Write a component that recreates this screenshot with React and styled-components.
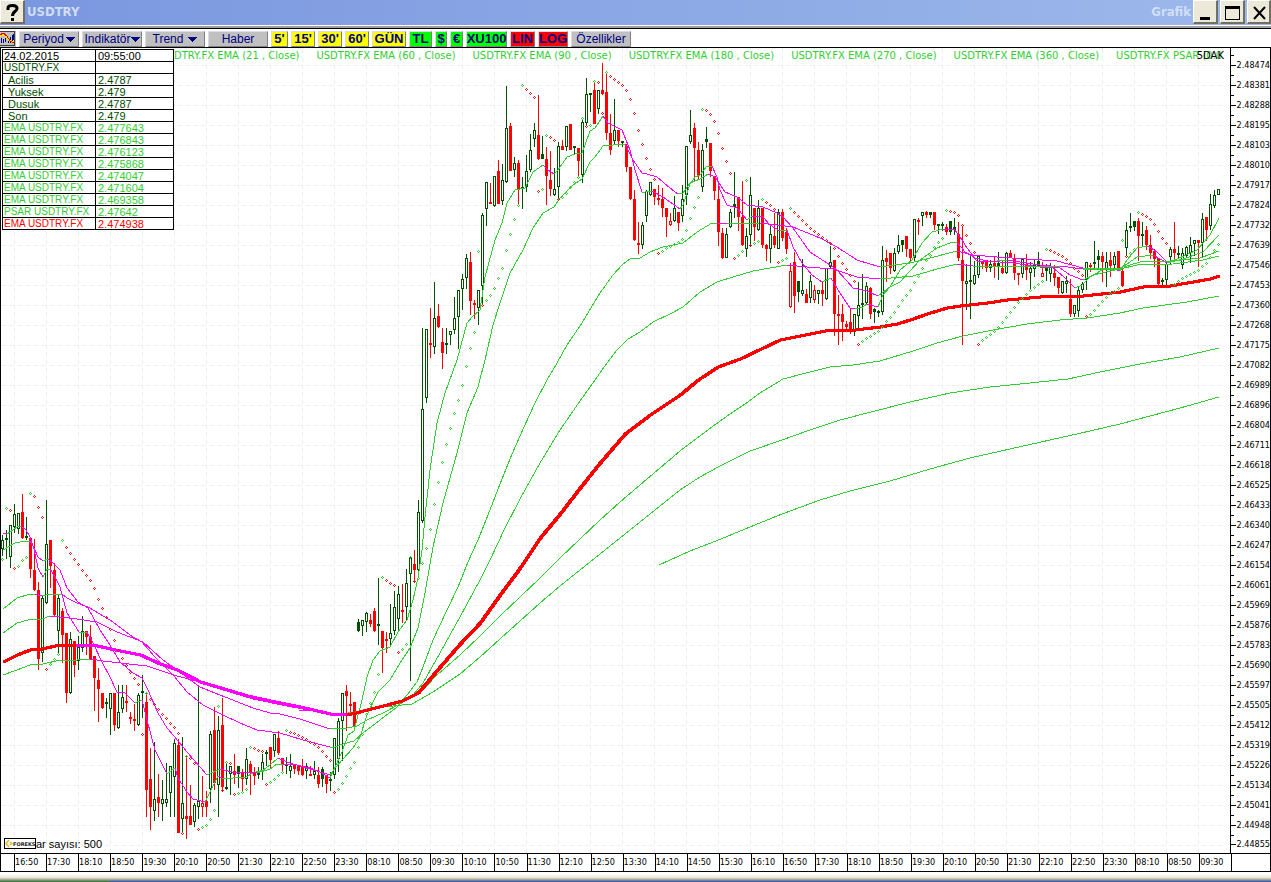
import React from "react";
import styled, { createGlobalStyle } from "styled-components";

const UP = "#005000";
const DOWN = "#ff0000";
const LIME = "#32cd32";
const PINK = "#ff00ff";

const GlobalStyle = createGlobalStyle`
  body {
    margin: 0;
    background: #fff;
    font-family: "Liberation Sans", Arial, sans-serif;
  }
  button {
    font-family: inherit;
  }
`;

const Window = styled.div`
  min-width: 900px;
  overflow: hidden;
`;
const TitleBar = styled.header`
  display: flex;
  align-items: flex-start;
  height: 25px;
  background: linear-gradient(90deg, #7a96df, #9db9eb);
  border-bottom: 1px solid #fff;
`;
const Title = styled.h1`
  flex: ${(props) => (props.grow ? 1 : "none")};
  margin: 0;
  padding-right: 2px;
  color: #d2def8;
  font: bold 13px/23px "DejaVu Sans Condensed", "DejaVu Sans", sans-serif;
`;
const WindowButton = styled.button`
  display: flex;
  align-items: center;
  justify-content: center;
  width: ${(props) => (props.last ? 24 : 25)}px;
  height: 24px;
  margin-right: ${(props) => (props.last ? 0 : 2)}px;
  padding: 0;
  background: #ece9d8;
  border: 1px solid;
  border-width: 1px 2px 2px 1px;
  border-color: #fff #716f64 #716f64 #fff;
`;
const Rule = styled.div`
  height: 2px;
  background: #a0a0a0;
  border-bottom: 1px solid #000;
`;

const Toolbar = styled.nav`
  display: flex;
  align-items: flex-end;
  height: 18px;
  gap: 3px;
`;
const IconButton = styled.button`
  width: 16px;
  height: 16px;
  padding: 0;
  border: 0;
  background: #c0c0c0;
`;
const ToolButton = styled.button`
  display: flex;
  align-items: center;
  justify-content: center;
  gap: ${(props) => props.gap || 0}px;
  width: ${(props) => props.w}px;
  height: 16px;
  padding: 0;
  overflow: hidden;
  white-space: nowrap;
  color: #000080;
  background: ${(props) => props.face || "#c0c0c0"};
  border: 1px solid;
  border-color: #dcdcdc #808080 #808080 #dcdcdc;
  font-size: ${(props) => (props.face ? 13 : 12)}px;
  font-weight: ${(props) => (props.face ? "bold" : "normal")};
  line-height: 14px;
`;

const Frame = styled.main`
  border: 1px solid #000;
`;
const ChartRow = styled.div`
  display: flex;
`;
const Plot = styled.section`
  position: relative;
  flex: 1;
  min-width: 0;
`;
const PlotSvg = styled.svg`
  display: block;
  width: 100%;
  height: 805px;
`;
const Legend = styled.div`
  position: absolute;
  top: 2px;
  left: 173px;
  right: 1px;
  display: flex;
  gap: 17px;
  overflow: hidden;
  white-space: pre;
  color: ${LIME};
  font: 10px/12px "DejaVu Sans", sans-serif;
`;
const Interval = styled.div`
  position: absolute;
  top: 2px;
  right: 6px;
  font: 10px/12px "DejaVu Sans", sans-serif;
`;
const InfoTable = styled.table`
  position: absolute;
  top: 1px;
  left: 1px;
  width: 172px;
  table-layout: fixed;
  border-collapse: collapse;
  background: #fff;
`;
const InfoRow = styled.tr`
  height: 12px;
  color: ${(props) => props.color};
`;
const Cell = styled.td`
  box-sizing: border-box;
  width: ${(props) => props.w}px;
  padding: 1px 0 0 ${(props) => props.pad || 1}px;
  border: 1px solid #000;
  overflow: hidden;
  white-space: nowrap;
  font-size: ${(props) => (props.small ? 10 : 11)}px;
  line-height: 10px;
`;
const BarCount = styled.div`
  position: absolute;
  left: 3px;
  bottom: 3px;
  display: flex;
  align-items: center;
  font-size: 11px;
  line-height: 12px;
`;

const PriceAxis = styled.ul`
  flex: none;
  width: 39px;
  margin: 0;
  padding: 7px 0 0;
  list-style: none;
  border-left: 1px solid #000;
`;
const Price = styled.li`
  position: relative;
  display: flex;
  align-items: center;
  height: 20px;
  gap: 1px;
  font: 9px/20px "DejaVu Sans Condensed", "DejaVu Sans", sans-serif;
  &:last-child {
    height: 18px;
  }
  &::before {
    content: "";
    width: 5px;
    height: 1px;
    background: #000;
  }
  &::after {
    content: "";
    position: absolute;
    top: 0;
    left: 0;
    width: 3px;
    height: 1px;
    background: #000;
  }
`;
const TimeAxis = styled.ol`
  display: flex;
  height: 17px;
  margin: 0;
  padding: 0 39px 0 13px;
  list-style: none;
  border-top: 1px solid #000;
`;
const Time = styled.li`
  flex: 1;
  box-sizing: border-box;
  border-left: 1px solid #000;
  font: 9px/17px "DejaVu Sans Condensed", "DejaVu Sans", sans-serif;
  &:last-child {
    border-right: 1px solid #000;
    margin-right: -1px;
  }
`;
const Bottom = styled.footer`
  height: 6px;
  margin-top: 3px;
  background: linear-gradient(#f6f4ee, #ece9d8 40%, #aca899 75%, #716f64);
`;
const TaskStrip = styled.div`
  height: 1px;
  background: linear-gradient(90deg, #2f8a30 109px, #2a5fd8 109px);
`;

const tools = [
  { label: "Periyod", w: 60, gap: 2, arrow: true },
  { label: "Indikatör", w: 60, gap: 0, arrow: true },
  { label: "Trend", w: 60, gap: 5, arrow: true },
  { label: "Haber", w: 60 },
  { label: "5'", w: 17, face: "#ffff00" },
  { label: "15'", w: 24, face: "#ffff00" },
  { label: "30'", w: 24, face: "#ffff00" },
  { label: "60'", w: 24, face: "#ffff00" },
  { label: "GÜN", w: 34, face: "#ffff00" },
  { label: "TL", w: 23, face: "#00ff00" },
  { label: "$", w: 12, face: "#00ff00" },
  { label: "€", w: 13, face: "#00ff00" },
  { label: "XU100", w: 41, face: "#00ff00" },
  { label: "LIN", w: 25, face: "#ff0000" },
  { label: "LOG", w: 30, face: "#ff0000" },
  { label: "Özellikler", w: 60 },
];

const legend = [
  "DTRY.FX EMA (21 , Close)",
  "USDTRY.FX EMA (60 , Close)",
  "USDTRY.FX EMA (90 , Close)",
  "USDTRY.FX EMA (180 , Close)",
  "USDTRY.FX EMA (270 , Close)",
  "USDTRY.FX EMA (360 , Close)",
  "USDTRY.FX PSAR (0.0",
];

const info = [
  ["24.02.2015", "09:55:00", "#000"],
  ["USDTRY.FX", "", UP],
  ["Acilis", "2.4787", UP],
  ["Yuksek", "2.479", UP],
  ["Dusuk", "2.4787", UP],
  ["Son", "2.479", UP],
  ["EMA USDTRY.FX", "2.477643", LIME],
  ["EMA USDTRY.FX", "2.476843", LIME],
  ["EMA USDTRY.FX", "2.476123", LIME],
  ["EMA USDTRY.FX", "2.475868", LIME],
  ["EMA USDTRY.FX", "2.474047", LIME],
  ["EMA USDTRY.FX", "2.471604", LIME],
  ["EMA USDTRY.FX", "2.469358", LIME],
  ["PSAR USDTRY.FX", "2.47642", LIME],
  ["EMA USDTRY.FX", "2.474938", DOWN],
];

const prices = `2.48474 2.48381 2.48288 2.48195 2.48103 2.48010 2.47917 2.47824 2.47732 2.47639
2.47546 2.47453 2.47360 2.47268 2.47175 2.47082 2.46989 2.46896 2.46804 2.46711
2.46618 2.46525 2.46433 2.46340 2.46247 2.46154 2.46061 2.45969 2.45876 2.45783
2.45690 2.45597 2.45505 2.45412 2.45319 2.45226 2.45134 2.45041 2.44948 2.44855`.split(/\s+/);

const times = `16:50 17:30 18:10 18:50 19:30 20:10 20:50 21:30 22:10 22:50 23:30
08:10 08:50 09:30 10:10 10:50 11:30 12:10 12:50 13:30 14:10 14:50 15:30 16:10 16:50
17:30 18:10 18:50 19:30 20:10 20:50 21:30 22:10 22:50 23:30 08:10 08:50 09:30`.split(/\s+/);

// high, body top, body bottom, low, kind
// g hollow up, G solid up, r solid down, R hollow down
const bars = `
535,540,549,556,g 530,538,540,559,G 525,525,557,568,g 504,514,527,533,g 513,513,529,534,g
494,512,538,539,r 517,536,538,540,G 538,538,569,578,r 539,570,590,591,r 582,590,659,670,r
595,598,653,662,g 500,544,603,604,g 540,540,566,588,r 563,570,615,616,r 595,598,631,653,g
608,611,635,663,r 633,633,693,703,r 632,639,693,694,g 641,641,665,677,r 636,647,661,670,g
616,631,648,652,g 631,631,637,655,r 625,637,659,659,r 656,656,678,711,r 668,680,689,722,r
693,693,708,709,r 698,702,704,718,G 693,693,709,735,g 693,693,725,731,r 685,712,728,729,g
685,697,709,713,g 685,701,703,712,r 712,717,719,724,r 704,719,721,731,r 693,695,725,726,g
675,691,693,718,G 693,702,790,817,r 748,779,807,830,r 742,799,811,821,g 774,797,803,817,r
780,799,804,821,g 763,799,803,807,g 766,766,793,817,g 739,743,777,817,g 739,745,833,833,r
737,803,819,833,g 756,816,819,839,r 785,816,825,825,r 803,805,822,827,g 685,801,807,819,g
776,803,807,817,R 791,801,807,817,r 731,734,789,803,g 707,730,783,790,r 716,730,785,817,g
698,725,787,792,r 764,787,789,790,G 766,766,774,795,g 754,771,775,784,r 766,766,774,788,G
769,772,779,791,r 748,759,779,785,g 761,764,772,795,r 767,773,776,785,r 767,772,775,779,G
754,762,771,780,g 750,752,754,766,G 747,747,760,769,r 734,734,751,757,g 731,738,753,755,r
758,758,764,771,r 757,764,766,774,G 754,766,771,778,g 764,764,769,774,r 766,766,771,775,r
759,767,775,776,r 763,766,771,779,g 766,774,776,776,r 761,771,775,779,g 767,775,784,788,r
767,769,779,787,G 775,775,784,793,r 772,779,781,791,G 738,738,775,779,g 718,721,759,772,g
693,693,721,761,g 685,691,696,731,r 692,704,706,716,r 702,702,727,728,r 619,622,631,632,G
620,620,626,636,g 612,613,622,632,g 614,620,624,627,r 608,611,631,632,r 578,624,626,645,G
631,631,648,673,r 632,639,641,653,r 604,633,639,646,g 591,607,631,635,g 586,594,619,631,g
584,610,612,623,r 569,583,607,621,g 556,558,574,681,g 550,564,570,582,r 500,512,570,571,g
328,409,521,523,g 329,329,398,403,g 308,343,345,358,r 282,318,347,354,g 304,316,327,328,r
328,342,353,369,r 328,343,345,354,G 331,331,335,345,g 297,318,330,334,g 290,290,317,349,g
274,279,289,310,g 254,258,278,289,g 252,262,301,315,r 300,303,305,319,r 290,290,308,325,g
213,215,286,305,g 182,182,209,226,g 183,202,204,204,r 176,176,206,207,g 160,171,204,204,r
164,180,201,205,g 86,128,182,183,g 123,126,171,171,r 157,163,170,177,g 160,163,189,205,r
177,187,189,209,G 155,171,187,192,g 134,150,170,172,g 123,130,139,147,g 95,135,159,160,r
136,154,159,159,G 147,159,176,205,r 151,180,189,196,r 168,189,195,196,g 142,146,187,198,g
140,146,150,150,r 126,126,147,151,g 124,124,150,150,r 146,146,148,154,G 148,148,161,176,r
119,122,175,183,g 78,94,123,125,g 93,93,95,112,G 82,90,124,124,r 90,90,109,114,g
63,90,94,95,r 73,92,133,140,r 114,133,150,155,r 99,130,141,145,g 130,130,141,147,r
141,141,143,147,G 144,146,167,172,r 167,167,199,200,r 190,199,240,241,r 222,243,245,254,r
222,225,245,249,g 190,191,216,222,g 182,182,195,196,g 189,189,197,205,r 185,198,200,205,r
188,199,208,217,r 208,208,217,237,r 213,221,225,226,R 196,208,221,222,g 212,212,223,231,r
185,199,216,222,g 146,146,195,205,g 110,135,142,144,g 123,128,148,182,r 142,150,176,180,r
144,150,187,192,g 127,139,142,148,G 143,143,171,177,r 176,176,191,200,r 181,199,232,246,r
228,233,258,259,r 228,234,258,258,g 209,212,227,228,g 172,204,207,218,G 197,197,217,231,r
181,217,245,246,r 228,236,249,257,g 177,195,235,246,g 208,208,227,241,r 200,208,230,231,g
208,208,245,248,r 244,245,249,261,r 226,234,249,263,g 213,236,245,248,r 209,212,249,249,g
209,212,238,241,r 228,232,249,254,r 263,271,307,308,R 252,262,296,313,r 281,281,292,302,G
259,290,294,296,g 289,294,303,303,r 275,281,298,303,g 285,290,300,303,R 290,290,294,304,g
282,290,294,306,r 268,268,299,300,g 246,262,267,269,g 260,260,314,336,r 295,314,316,345,r
304,314,322,341,r 321,324,327,330,r 309,322,330,334,r 314,314,331,336,g 282,305,316,328,g
274,303,305,319,G 282,286,303,304,g 287,288,314,319,r 308,309,312,323,G 310,311,313,317,G
246,260,312,315,g 250,258,262,282,r 253,253,268,274,r 248,253,271,272,g 235,245,252,254,g
240,240,245,252,G 236,236,249,257,r 249,249,258,262,r 219,219,258,262,g 218,220,222,235,r
212,212,216,226,g 211,212,215,218,r 212,212,215,218,G 212,212,225,230,r 224,224,226,234,G
222,224,226,231,G 224,227,232,235,r 221,221,232,235,G 218,227,230,235,G 222,234,258,261,r
226,260,281,345,r 264,281,284,310,g 254,280,282,319,G 261,275,284,285,g 256,256,275,278,g
261,261,264,269,r 260,260,268,272,r 260,264,268,272,g 256,263,266,278,r 252,263,266,280,G
260,268,273,274,r 252,253,273,274,g 250,253,258,258,r 254,258,273,280,r 273,273,275,285,r
259,259,274,278,g 254,264,270,280,r 262,268,273,289,g 260,265,269,277,g 252,261,266,266,G
262,273,277,277,R 264,266,271,281,G 263,266,274,282,g 265,273,278,286,r 277,277,288,294,r
281,281,293,294,g 276,281,284,293,g 279,299,314,317,r 305,305,314,317,g 287,290,311,317,g
282,284,290,293,g 262,262,280,290,g 263,265,267,272,r 241,262,264,269,G 250,256,260,269,G
252,256,262,282,r 252,262,270,287,g 252,260,266,277,r 252,256,265,269,g 251,251,271,271,r
269,271,286,287,r 222,230,248,256,g 213,226,228,232,G 221,221,227,231,G 218,221,236,261,r
222,234,236,247,G 226,230,245,250,r 235,245,253,259,r 249,251,259,267,r 258,258,284,286,r
278,280,282,285,G 262,264,280,286,g 247,249,257,264,g 222,249,253,262,r 246,253,255,258,G
248,253,265,269,g 246,247,256,257,g 237,245,253,263,g 240,240,244,256,g 240,240,243,267,r
213,219,243,257,g 217,217,230,241,r 194,204,226,230,g 190,195,206,208,g 189,189,195,195,g`
  .trim()
  .split(/\s+/)
  .map((row) => row.split(","));

const averages = [
  `3,533 7,534 13,530 18,526 21,526 26,530 30,537 34,549 38,568 43,577 47,569 50,569 55,577 60,587 67,613 79,632
   87,632 93,643 102,662 110,677 117,692 125,693 135,703 142,700 147,720 155,750 167,774 175,768 178,778 187,792
   193,799 205,802 210,792 218,776 222,778 233,778 246,777 253,773 263,770 270,765 278,758 287,762 303,767
   320,772 330,778 335,767 342,752 348,735 354,731 362,700 367,677 373,660 380,651 390,647 398,632 407,620
   413,600 418,578 422,550 425,517 430,470 437,423 445,393 457,360 467,323 472,317 480,310 485,277 495,240
   502,223 507,203 515,190 525,188 533,172 543,165 548,170 554,174 558,170 567,157 575,154 582,153 590,131
   595,128 603,116 608,123 622,130 630,150 635,170 642,192 645,192 652,191 663,197 680,209 683,205 690,184
   695,177 700,175 707,166 712,166 717,177 720,190 727,205 737,208 747,220 752,216 763,217 770,225 780,231
   787,230 793,247 802,263 812,275 822,282 831,278 840,293 850,308 855,309 863,307 867,304 878,307 883,295
   890,287 900,270 912,260 922,243 932,232 943,229 955,230 962,240 967,248 977,261 987,262 1007,260 1020,262
   1040,265 1050,266 1057,271 1065,278 1075,288 1082,285 1090,277 1102,270 1110,268 1120,271 1127,260 1137,248
   1148,246 1157,252 1167,262 1177,259 1197,250 1210,235 1219,218`,
  `3,550 15,543 25,541 30,541 34,548 38,557 43,561 48,559 53,563 60,570 67,588 78,602 88,608 100,630 110,645
   120,662 133,673 142,678 148,690 158,713 167,728 174,736 187,752 207,775 220,769 232,772 257,773 270,769
   277,764 283,764 297,765 310,768 320,772 330,775 335,768 343,759 353,748 360,737 367,715 378,692 390,680
   400,663 410,648 418,628 425,593 433,547 443,503 457,453 467,413 478,387 485,360 493,325 500,303 510,273
   523,250 533,228 543,213 554,207 560,198 573,185 582,179 590,162 595,157 603,146 613,145 625,144 633,160
   642,173 647,174 657,177 670,188 678,194 683,193 690,183 700,179 708,174 715,177 725,192 737,197 747,205
   763,207 777,213 783,217 793,228 810,252 827,263 837,270 847,281 853,288 867,291 878,296 890,287 900,282
   920,260 937,248 950,243 957,242 965,252 975,258 987,261 1013,263 1040,267 1060,268 1070,275 1083,280
   1093,275 1120,269 1137,257 1153,255 1167,263 1183,259 1203,252 1219,235`,
  `3,609 17,598 30,594 35,594 42,596 50,594 62,594 67,598 77,603 88,607 110,620 133,637 142,642 155,657 174,676
   187,692 203,705 223,715 240,723 257,730 280,733 303,740 330,747 335,747 343,744 354,741 363,733 380,720
   397,707 407,695 417,682 423,667 433,640 447,610 458,587 468,562 478,540 488,515 500,484 512,454 524,427
   535,403 547,380 557,363 567,345 582,323 600,293 613,275 623,264 630,259 640,258 650,252 663,247 683,243
   697,232 712,223 717,223 727,224 760,223 793,227 820,238 837,247 857,260 880,267 910,263 930,258 957,251
   973,255 997,257 1027,259 1057,261 1083,268 1120,268 1140,262 1160,261 1173,261 1200,258 1219,251`,
  `3,633 17,623 28,620 42,619 50,616 60,617 77,619 97,622 117,632 143,642 163,660 177,670 200,687 220,695
   253,708 270,713 280,714 300,719 330,729 347,728 357,726 367,720 383,713 400,704 413,695 423,683 440,653
   460,617 480,580 490,560 505,528 520,499 540,463 560,430 580,401 595,380 607,363 617,350 628,339 640,332
   653,322 670,314 683,307 700,292 717,282 733,277 753,271 787,265 807,267 833,269 857,277 880,279 913,276
   937,269 957,264 973,266 1060,266 1083,269 1120,269 1137,265 1173,264 1203,260 1219,256`,
  `3,675 17,670 30,665 43,664 60,660 77,660 90,659 103,661 147,666 177,676 200,682 220,689 253,699 287,706
   320,712 335,715 355,712 377,708 400,702 420,693 437,675 460,655 480,636 500,616 520,597 540,578 560,558
   580,539 600,520 620,502 640,485 660,468 680,451 700,436 716,424 730,414 745,404 760,393 783,379 810,372
   830,367 853,365 880,361 913,351 937,343 963,336 993,330 1027,324 1060,320 1087,318 1120,313 1143,308
   1187,302 1219,296`,
  `299,710 320,711 335,714 355,713 373,708 393,706 412,704 433,692 460,674 480,657 500,639 520,621 540,603
   560,586 580,570 600,554 620,538 640,522 660,506 680,490 700,477 720,466 750,451 782,440 810,430 840,420
   875,411 910,402 950,393 990,387 1030,383 1068,379 1100,372 1140,364 1180,357 1219,348`,
  `659,565 690,551 716,541 750,527 782,514 820,500 850,491 890,481 930,469 970,458 1010,449 1050,440 1090,431
   1120,424 1150,416 1180,408 1219,397`,
];

const mainAverage = `3,662 17,655 30,650 42,649 55,646 75,645 97,646 110,649 140,655 160,664 177,670 200,682 217,687
  247,696 270,701 300,707 330,714 346,715 356,713 367,710 387,705 402,701 418,693 440,667 460,644 480,623
  500,595 520,568 540,538 560,514 580,488 600,463 625,434 650,415 680,395 698,380 718,367 740,359 780,340
  795,337 830,330 855,330 880,327 897,324 913,319 927,314 947,308 960,306 987,303 1007,300 1040,297 1075,296
  1083,296 1120,292 1143,287 1170,286 1210,279 1219,276`;

// parabolic SAR runs: side, first x, levels
const sar = `
b -2 559 559
a 6 508 510
b 14 568 566 560 557
a 30 493 496 507 517
b 46 669 664 659 654
a 62 540 547 553 559 564 570 575 580 588 599 608 617 629 640 650 658 665 672 678 684
b 142 734
a 146 693 699 704 709 714 718 723 727 733
b 182 833
a 186 756 758 763
b 198 829 827 825 819 810
a 218 706
b 222 790
a 226 762 763
b 234 794 793 792 789
a 250 747 748 750 751
b 266 784 782 779 775 772
a 286 730 732 733 735 737 739 742 744 747 751 756 760
b 334 792 789 783 776 768 762 747 734 714 703 692 674
a 382 577 580 583 585
b 398 652 649 644
a 410 557
b 414 581 578 563 548 529 504 482 462 444 428 413 400 385 366 348 332
a 478 251
b 482 305 300 295 288 278 268 250 234 219 205
a 522 85 89 93 97
b 538 191 189
a 546 135 137 140
b 558 199 197 193 187 182 177
a 582 118
b 586 126 125
a 594 81 82
b 602 113
a 606 72 76 79 82 85 90 99 113 130 144 158 169 179
b 658 253 251 248 246 244 242 239 230 218 207 197
a 702 109 110 114 121 133 148 161 173
b 734 258 255 251
a 746 180
b 750 245 243 241
a 762 199 202 205 209
b 778 262 260 258
a 790 208 212 216 220 224 228 231 234 237 240 243 248 256 263 269 275 281
b 858 344 341 338 336 333 331 327 321 317 312 306 300 295 290 282 276 268 260 255 247 242 238
a 946 210 211 212 215 225 235 243 252
b 978 344 340 337 334 331 327 322 317 312 307 302 298 294 290 287 284 281
a 1046 249 250 252 254 256 259 263 268 271 275
b 1086 316 314 310 305 301 297 293 291 288
a 1122 240
b 1126 256 253 249
a 1138 212 214 216 219 224 231 238 243
b 1170 286 284 281 278 276 274 272 270 266 263 257 250 244`
  .trim()
  .split("\n")
  .map((line) => line.split(" "));

function Grid() {
  return (
    <g stroke="#f0f0f0" strokeDasharray="5 3">
      {prices.map((p, i) => (
        <line key={p} x1="1" x2="1225" y1={65.5 + i * 20} y2={65.5 + i * 20} />
      ))}
      {times.map((t, i) => (
        <line key={i} x1={14.5 + i * 32} x2={14.5 + i * 32} y1="48" y2="853" />
      ))}
    </g>
  );
}

function Candle({ x, bar }) {
  const [high, top, bottom, low] = bar.slice(0, 4).map(Number);
  const kind = bar[4];
  const color = kind.toLowerCase() === "g" ? UP : DOWN;
  const hollow = kind === "g" || kind === "R";
  return (
    <g fill={color}>
      <rect x={x} y={high} width="1" height={Math.max(1, low - high)} />
      <rect x={x - 1} y={top} width="3" height={bottom - top} />
      {hollow && <rect x={x} y={top + 1} width="1" height={Math.max(1, bottom - top - 2)} fill="#fff" />}
    </g>
  );
}

// a falling stretch is always pink, a rising one takes the line's own colour
function Average({ points, rising, width }) {
  const list = points.trim().split(/\s+/).map((p) => p.split(",").map(Number));
  const runs = [];
  for (let i = 1; i < list.length; i++) {
    const color = list[i][1] > list[i - 1][1] ? PINK : rising;
    const last = runs[runs.length - 1];
    if (last && last.color === color) {
      last.points.push(list[i]);
    } else {
      runs.push({ color, points: [list[i - 1], list[i]] });
    }
  }
  return runs.map((run, i) => (
    <polyline key={i} points={run.points.join(" ")} fill="none" stroke={run.color} strokeWidth={width} />
  ));
}

function Sar() {
  return sar.map(([side, start, ...levels]) =>
    levels.map((y, i) => {
      const first = i === 0;
      const color = (side === "a") === first ? LIME : "#e01818";
      const x = Number(start) + i * 4;
      return (
        <path key={x} fill={color} d={`M${x} ${y - 1}h1v1h-1zM${x - 1} ${y}h1v1h-1zM${x + 1} ${y}h1v1h-1zM${x} ${Number(y) + 1}h1v1h-1z`} />
      );
    })
  );
}

function Chart() {
  return (
    <PlotSvg viewBox="1 48 1229 805" preserveAspectRatio="none" shapeRendering="crispEdges" role="img" aria-label="USDTRY">
      <Grid />
      {bars.map((bar, i) => (
        <Candle key={i} x={2 + i * 4} bar={bar} />
      ))}
      {averages.map((points, i) => (
        <Average key={i} points={points} rising={LIME} width={1} />
      ))}
      {/* square pen: steep parts come out wider than flat ones */}
      <Average points={mainAverage} rising={DOWN} width={3} />
      <g transform="translate(1 0)">
        <Average points={mainAverage} rising={DOWN} width={3} />
      </g>
      <Sar />
    </PlotSvg>
  );
}

function Arrow() {
  return (
    <svg width="9" height="5" viewBox="0 0 9 5" shapeRendering="crispEdges">
      <path d="M0 0h9L4.5 5z" fill="#000080" />
    </svg>
  );
}

function ChartIcon() {
  return (
    <svg width="16" height="16" viewBox="0 0 16 16" shapeRendering="crispEdges">
      <path d="M0 0h15v1H0zM14 0h1v15h-1zM0 14h15v1H0z" fill="#404040" />
      <path d="M1 7h1v5H1zM3 8h1v4H3zM5 7h1v4H5zM8 8h1v4H8zM10 6h1v6h-1zM12 4h1v7h-1zM13 3h1v9h-1z" fill="#000080" />
      <path d="M0 5L3 3L6 5L9 9L12 11L14 10" fill="none" stroke="#ffe000" strokeWidth="2" />
      <path d="M0 4L3 2L7 5L10 10L14 12" fill="none" stroke="#e00000" />
    </svg>
  );
}

function Logo() {
  return (
    <svg width="32" height="12" viewBox="0 0 32 12">
      <rect x="0.5" y="0.5" width="31" height="10" fill="#fff" stroke="#000" />
      <path d="M5 2L2 5.5L5 9M6 4L8 5.5L6 7" fill="none" stroke="#e0b820" strokeWidth="1.4" />
      <text x="9" y="8" fontSize="5" fontWeight="bold" fill="#222" fontFamily="DejaVu Sans, sans-serif">FOREKS</text>
    </svg>
  );
}

function App() {
  return (
    <Window>
      <GlobalStyle />
      <TitleBar>
        <WindowButton type="button" aria-label="Help">
          <svg width="15" height="19" viewBox="0 0 15 19">
            <path d="M3 8V6Q3 3.5 7.5 3.5Q12 3.5 12 6.5C12 9.5 7.5 9 7.5 14" fill="none" stroke="#000" strokeWidth="3" />
            <rect x="6" y="16" width="3" height="3" />
          </svg>
        </WindowButton>
        <Title grow="true">USDTRY</Title>
        <Title as="span">Grafik</Title>
        <WindowButton type="button" aria-label="Minimize">
          <svg width="18" height="18"><path d="M4 14h10v3H4z" /></svg>
        </WindowButton>
        <WindowButton type="button" aria-label="Maximize">
          <svg width="18" height="18" shapeRendering="crispEdges">
            <path d="M2 3h15v14H2zM3 6v10h13V6z" fillRule="evenodd" />
          </svg>
        </WindowButton>
        <WindowButton type="button" aria-label="Close" last="true">
          <svg width="18" height="18"><path d="M4 4L15 16M15 4L4 16" stroke="#000" strokeWidth="2" /></svg>
        </WindowButton>
      </TitleBar>
      <Rule />
      <Toolbar>
        <IconButton type="button" aria-label="Chart">
          <ChartIcon />
        </IconButton>
        {tools.map((tool) => (
          <ToolButton key={tool.label} type="button" w={tool.w} gap={tool.gap} face={tool.face}>
            {tool.label}
            {tool.arrow && <Arrow />}
          </ToolButton>
        ))}
      </Toolbar>
      <Frame>
        <ChartRow>
          <Plot>
            <Chart />
            <Legend>
              {legend.map((item) => (
                <span key={item}>{item}</span>
              ))}
            </Legend>
            <Interval>5DAK</Interval>
            <InfoTable>
              <tbody>
                {info.map(([name, value, color], i) => (
                  <InfoRow key={i} color={color}>
                    <Cell w={93} pad={i > 1 && i < 6 ? 5 : 1} small={name.includes("USDTRY") ? "true" : undefined}>{name}</Cell>
                    <Cell w={78} pad={2}>{value}</Cell>
                  </InfoRow>
                ))}
              </tbody>
            </InfoTable>
            <BarCount>
              <Logo />
              ar sayısı: 500
            </BarCount>
          </Plot>
          <PriceAxis>
            {prices.map((p) => (
              <Price key={p}>{p}</Price>
            ))}
          </PriceAxis>
        </ChartRow>
        <TimeAxis>
          {times.map((t, i) => (
            <Time key={i}>{t}</Time>
          ))}
        </TimeAxis>
      </Frame>
      <Bottom />
      <TaskStrip />
    </Window>
  );
}

export default App;
